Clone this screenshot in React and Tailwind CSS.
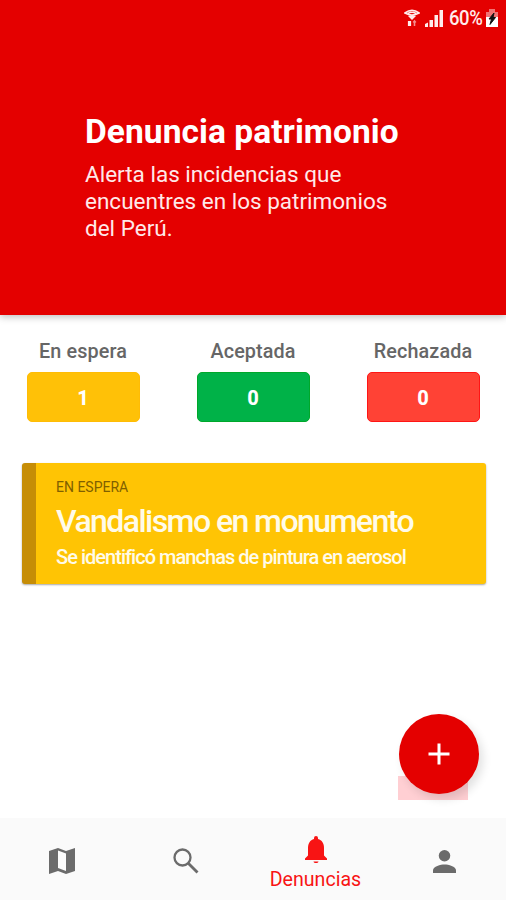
const stats = [
  { label: 'En espera', value: 1, box: 'bg-[#ffc107] border-[#ffbc05]' },
  { label: 'Aceptada', value: 0, box: 'bg-[#00b248] border-[#00a82a]' },
  { label: 'Rechazada', value: 0, box: 'bg-[#ff4235] border-[#ff1515]' },
]

function StatusBar() {
  return (
    <div className="flex h-9 items-center justify-end pr-2 text-[#ffecec]">
      {/* Wifi */}
      <svg className="h-[18px] w-4" viewBox="0 0 16 18" fill="none" stroke="currentColor">
        <path d="M1 4Q8-1.500 15 4Q8 8 1 4zM4 4.500Q8 2 12 4.500" strokeWidth="1.700" />
        <path d="M4 7Q8 5 12 7L8 11Z" fill="currentColor" stroke="none" />
        <path d="M5.500 12v5" strokeWidth="3.200" />
        <path d="M10.500 17v-5M9.200 13.500l1.300-1.500 1.300 1.500" strokeWidth="1.600" opacity=".6" />
      </svg>
      {/* Signal */}
      <svg className="ml-[5px] h-[18px] w-[18px]" viewBox="0 0 18 18" fill="currentColor">
        <path d="M0 18v-3l3-1.500V18zM4.500 18v-7H8v7zM9.500 18V6H13v12zM14.500 18V1H18v17z" />
      </svg>
      <span className="ml-1.5 w-[35px] origin-left scale-x-[0.88] text-[21px] leading-none font-medium tracking-[-0.5px]">60%</span>
      {/* Battery */}
      <svg className="ml-0.5 h-[18px] w-3" viewBox="0 0 12 18">
        <path d="M3 0h6v3h3v15H0V3h3z" fill="#fff" opacity=".45" />
        <path d="M0 8h12v10H0z" fill="#fff" />
        <path d="M8 4L3 10h2.500L4 15.500l5.500-7H7z" fill="#111" stroke="#111" />
      </svg>
    </div>
  )
}

export default function App() {
  return (
    <div className="flex h-[900px] w-[506px] flex-col overflow-hidden bg-white font-['Roboto',sans-serif]">
      <header className="h-[315px] shrink-0 bg-[#e40000] text-white shadow-[0_2px_7px_rgba(0,0,0,0.25)]">
        <StatusBar />
        <div className="pt-[78px] pl-[85px]">
          <h1 className="text-[33.500px] leading-[36px] font-bold tracking-[0.06px] whitespace-nowrap">Denuncia patrimonio</h1>
          <p className="mt-[11px] text-[22.500px] leading-[27px] whitespace-nowrap text-[#ffe9e9]">
            Alerta las incidencias que<br />
            encuentres en los patrimonios<br />
            del Perú.
          </p>
        </div>
      </header>

      <main className="flex-1">
        {/* Report counters */}
        <section className="flex justify-between px-[26.500px] pt-[24px]">
          {stats.map((s) => (
            <div key={s.label} className="flex w-[113px] flex-col items-center">
              <span className="text-[19.800px] leading-[26px] font-medium tracking-[0.1px] whitespace-nowrap text-[#666]">{s.label}</span>
              <div className={`mt-[7px] flex h-[50px] w-full items-center justify-center rounded-[5px] border pt-px text-[20px] font-extrabold text-white ${s.box}`}>
                {s.value}
              </div>
            </div>
          ))}
        </section>

        {/* Report card */}
        <article className="mt-[41px] ml-[22px] h-[121px] w-[464px] rounded-[3px] border-l-[14px] border-[#c68d06] bg-[#ffc404] pt-[15px] pl-[20px] whitespace-nowrap text-[#fffbe9] shadow-[0_1px_2px_rgba(0,0,0,0.35)]">
          <p className="text-[14px] leading-[18px] text-[#805f00]">EN ESPERA</p>
          <h2 className="mt-[7px] text-[32px] leading-[36px] font-medium tracking-[-1.560px]">Vandalismo en monumento</h2>
          <p className="mt-[6px] text-[20px] leading-[24px] font-medium tracking-[-0.970px]">Se identificó manchas de pintura en aerosol</p>
        </article>

        <div className="relative mt-[130px] ml-[399px] h-[86px] w-20">
          <div className="absolute top-[62px] left-[-1px] h-[24px] w-[70px] bg-[#ffcfd3]"></div>
          <button className="relative flex h-20 w-20 items-center justify-center rounded-full bg-[#e40000] shadow-[4px_5px_10px_rgba(0,0,0,0.12)]">
            <svg className="h-[22px] w-[22px]" viewBox="0 0 22 22" stroke="#fff" strokeWidth="3">
              <path d="M11 .5v21M.5 11h21" />
            </svg>
          </button>
        </div>
      </main>

      <nav className="flex h-[82px] shrink-0 bg-[#fafafa] text-[#6b6b6b]">
        <div className="flex w-[124px] items-center justify-center pt-1">
          <svg className="h-[26px] w-[26px]" viewBox="0 0 26 26">
            <path d="M0 3L9 0l8 3 9-3v23l-9 3-8-3-9 3z" fill="currentColor" />
            <path d="M9 2.500l8 3V23l-8-3z" fill="#fafafa" />
          </svg>
        </div>
        <div className="flex w-[124px] items-center justify-center pt-1">
          <svg className="h-[26px] w-[26px]" viewBox="0 0 26 26" fill="none" stroke="currentColor">
            <circle cx="9.500" cy="9.500" r="8" strokeWidth="2.300" />
            <path d="M15.500 15.500L24.500 24.500" strokeWidth="2.800" />
          </svg>
        </div>
        <div className="flex w-[135px] flex-col items-center pt-[18px] text-[#f81414]">
          <svg className="h-7 w-[22px]" viewBox="0 0 22 28" fill="currentColor">
            <path d="M11 0a2 2 0 0 0-2 2v1C5 4 3 7.500 3 12v7.500l-3 3V24h22v-1.500l-3-3V12c0-4.500-2-8-6-9V2a2 2 0 0 0-2-2zM8.500 25.400h5c-.3 2.200-4.700 2.200-5 0z" />
          </svg>
          <span className="mt-[3px] text-[19.600px] leading-[26px]">Denuncias</span>
        </div>
        <div className="flex flex-1 items-center justify-center pt-1">
          <svg className="h-[23px] w-[23px]" viewBox="0 0 24 24" fill="currentColor">
            <circle cx="12" cy="6" r="6" />
            <path d="M0 24v-3c0-4 8-6 12-6s12 2 12 6v3z" />
          </svg>
        </div>
      </nav>
    </div>
  )
}
